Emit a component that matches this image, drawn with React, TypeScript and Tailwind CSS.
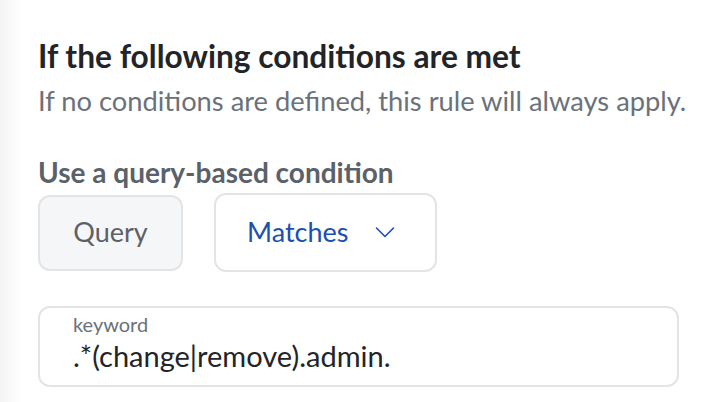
export default function App() {
  return (
    <div className="flex h-[402px] w-[726px] overflow-hidden bg-white" style={{ fontFamily: 'Lato, "Noto Sans", sans-serif' }}>
      {/* faint left page edge */}
      <div className="h-full w-[22px] shrink-0 bg-gradient-to-r from-[#f4f4f5] to-white" />
      <div className="flex flex-1 flex-col pl-[16px] pt-[37px]">
        <h2 className="text-[31.7px] font-bold leading-[38px] text-[#222428]">If the following conditions are met</h2>
        <p className="mt-[9px] text-[27.3px] leading-[34px] text-[#6b717a]">
          If no conditions are defined, this rule will always apply.
        </p>

        <div className="mt-[38px] text-[28px] font-bold leading-[32px] text-[#5b6169]">Use a query-based condition</div>

        <div className="mt-[5px] flex items-center gap-[31px]">
          <div className="flex h-[76px] w-[145px] items-center justify-center rounded-[12px] border-2 border-[#e3e4e6] bg-[#f5f6f7] text-[27px] text-[#5d6167]">
            Query
          </div>
          <button className="flex h-[79px] w-[223px] items-center gap-[27px] rounded-[12px] border-2 border-[#e3e4e6] bg-white pl-[31px] text-[27px] text-[#1d4fb0]">
            Matches
            <svg width="20" height="13" viewBox="0 0 20 13" fill="none">
              <path d="M1.5 2l8.5 8.5 8.5-8.5" stroke="#1d4fb0" strokeWidth="1.6" strokeLinecap="round" strokeLinejoin="round" />
            </svg>
          </button>
        </div>

        <div className="mt-[34px] flex h-[81px] w-[641px] flex-col rounded-[12px] border-2 border-[#e3e4e6] bg-white pl-[33px] pt-[4px]">
          <div className="text-[20px] leading-[24px] text-[#6b717a]">keyword</div>
          <div className="mt-[3px] text-[29px] leading-[34px] text-[#222428]">.*(change|remove).admin.</div>
        </div>
      </div>
    </div>
  )
}
